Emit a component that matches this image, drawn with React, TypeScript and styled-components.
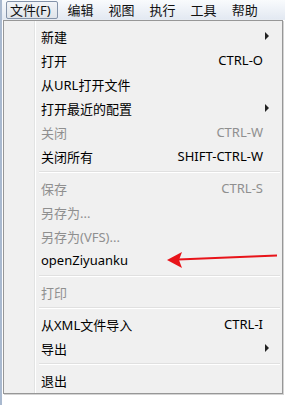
import React from 'react';
import styled, { createGlobalStyle } from 'styled-components';

const GlobalStyle = createGlobalStyle`
  html, body {
    margin: 0;
    padding: 0;
    background: #ffffff;
  }
  body {
    font-family: "Noto Sans", "Noto Sans CJK SC", sans-serif;
  }
`;

const Window = styled.div`
  position: relative;
  width: 285px;
  height: 405px;
  overflow: hidden;
  box-sizing: border-box;
  border-left: 2px solid #a9b9cf;
  background: #ffffff;
`;

const MenuBar = styled.div`
  display: flex;
  align-items: center;
  height: 20px;
  padding-left: 4px;
  box-sizing: border-box;
  background: linear-gradient(#f9fbfd, #e3e9f2);
  border-bottom: 1px solid #e6ebf2;
`;

const BarItem = styled.div<{ $active?: boolean }>`
  flex-shrink: 0;
  white-space: nowrap;
  height: 18px;
  margin-top: 1px;
  display: flex;
  align-items: center;
  padding: ${(p) => (p.$active ? '0 6px 0 3px' : '0 6px 0 7px')};
  margin-right: ${(p) => (p.$active ? '2px' : '0')};
  box-sizing: border-box;
  font-size: 13px;
  line-height: 16px;
  color: #111;
  border: 1px solid ${(p) => (p.$active ? '#8493a9' : 'transparent')};
  border-radius: 2px;
  background: ${(p) => (p.$active ? 'linear-gradient(#f2f4f7, #dfe4ea)' : 'transparent')};
`;

const Dropdown = styled.div`
  margin-left: 1px;
  width: 280px;
  box-sizing: border-box;
  border: 1px solid #979797;
  background: #f0f0f0;
  padding: 3px 2px 1px 2px;
  display: flex;
  flex-direction: column;
  position: relative;
  box-shadow: 1px 1px 0 #d4d4d4;
`;

const IconGutter = styled.div`
  position: absolute;
  top: 0;
  bottom: 0;
  left: 30px;
  width: 2px;
  border-left: 1px solid #e2e3e3;
  border-right: 1px solid #ffffff;
  box-sizing: border-box;
`;

const Row = styled.div<{ $disabled?: boolean }>`
  height: 24px;
  display: flex;
  align-items: center;
  padding-left: 35px;
  padding-right: 17px;
  font-size: 13px;
  color: ${(p) => (p.$disabled ? '#8f8f8f' : '#000000')};
  position: relative;
`;

const Label = styled.span`
  flex: 1;
  white-space: nowrap;
`;

const Shortcut = styled.span`
  white-space: nowrap;
`;

const SubArrow = styled.span`
  width: 0;
  height: 0;
  border-top: 4px solid transparent;
  border-bottom: 4px solid transparent;
  border-left: 4px solid #222;
  margin-right: -6px;
`;

const Separator = styled.div`
  height: 8px;
  display: flex;
  align-items: center;
  padding-left: 33px;
`;

const SepLine = styled.div`
  flex: 1;
  height: 1px;
  background: #e0e0e0;
  border-bottom: 1px solid #ffffff;
`;

const ArrowMark = styled.svg`
  position: absolute;
  left: 0;
  top: 0;
  pointer-events: none;
`;

type Item =
  | { kind: 'sep' }
  | { kind: 'item'; label: string; shortcut?: string; sub?: boolean; disabled?: boolean };

const items: Item[] = [
  { kind: 'item', label: '新建', sub: true },
  { kind: 'item', label: '打开', shortcut: 'CTRL-O' },
  { kind: 'item', label: '从URL打开文件' },
  { kind: 'item', label: '打开最近的配置', sub: true },
  { kind: 'item', label: '关闭', shortcut: 'CTRL-W', disabled: true },
  { kind: 'item', label: '关闭所有', shortcut: 'SHIFT-CTRL-W' },
  { kind: 'sep' },
  { kind: 'item', label: '保存', shortcut: 'CTRL-S', disabled: true },
  { kind: 'item', label: '另存为...', disabled: true },
  { kind: 'item', label: '另存为(VFS)...', disabled: true },
  { kind: 'item', label: 'openZiyuanku' },
  { kind: 'sep' },
  { kind: 'item', label: '打印', disabled: true },
  { kind: 'sep' },
  { kind: 'item', label: '从XML文件导入', shortcut: 'CTRL-I' },
  { kind: 'item', label: '导出', sub: true },
  { kind: 'sep' },
  { kind: 'item', label: '退出' },
];

const menus = ['编辑', '视图', '执行', '工具', '帮助'];

export default function App() {
  return (
    <>
      <GlobalStyle />
      <Window>
        <MenuBar>
          <BarItem $active>文件(F)</BarItem>
          {menus.map((m) => (
            <BarItem key={m}>{m}</BarItem>
          ))}
        </MenuBar>
        <Dropdown>
          <IconGutter />
          {items.map((it, i) =>
            it.kind === 'sep' ? (
              <Separator key={i}>
                <SepLine />
              </Separator>
            ) : (
              <Row key={i} $disabled={it.disabled}>
                <Label>{it.label}</Label>
                {it.shortcut && <Shortcut>{it.shortcut}</Shortcut>}
                {it.sub && <SubArrow />}
              </Row>
            )
          )}
        </Dropdown>
        <ArrowMark width="285" height="405" viewBox="0 0 285 405">
          <line x1="275" y1="255.5" x2="176" y2="259.5" stroke="#e8141a" strokeWidth="2" />
          <polygon points="165,260 180,252 177,260 180,268" fill="#e8141a" />
        </ArrowMark>
      </Window>
    </>
  );
}
